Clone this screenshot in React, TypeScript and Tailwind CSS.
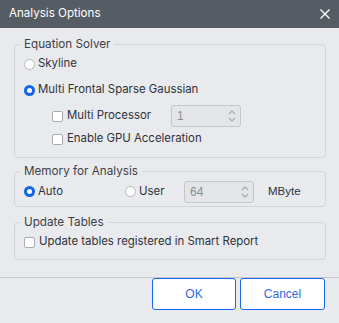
import React from "react";

const inter = { fontFamily: "Inter, 'Noto Sans', sans-serif" };

function Radio({ checked }: { checked?: boolean }) {
  return checked ? (
    <span className="flex h-[11px] w-[11px] shrink-0 items-center justify-center rounded-full bg-[#1565e8]">
      <span className="h-[5px] w-[5px] rounded-full bg-white" />
    </span>
  ) : (
    <span className="h-[11px] w-[11px] shrink-0 rounded-full border border-[#b4b8be] bg-white" />
  );
}

function Check() {
  return <span className="h-[11px] w-[11px] shrink-0 rounded-[2px] border border-[#a8acb2] bg-white" />;
}

function Spin({ value }: { value: string }) {
  return (
    <div className="flex h-[22px] w-[70px] shrink-0 items-center justify-between rounded-[3px] border border-[#c3c6cb] bg-[#e3e5e9] pl-[5px] pr-[3px]">
      <span className="font-['Liberation_Sans',Arial,sans-serif] text-[12px] text-[#8a8d92]">{value}</span>
      <svg width="10" height="16" viewBox="0 0 10 16" fill="none" stroke="#a7aaaf" strokeWidth="1.2">
        <path d="M2 6 L5 3 L8 6" />
        <path d="M2 10 L5 13 L8 10" />
      </svg>
    </div>
  );
}

function Group({ title, children, className }: { title: string; children: React.ReactNode; className?: string }) {
  return (
    <fieldset className={"ml-[14px] mr-[13px] rounded-[4px] border border-[#d2d4d9] " + (className ?? "")}>
      <legend className="ml-[5px] px-1 text-[11.7px] leading-[16px] text-[#3d4148]">{title}</legend>
      {children}
    </fieldset>
  );
}

export default function App() {
  return (
    <div className="flex h-[323px] w-[339px] flex-col bg-[#e9eaee] text-[11.4px] text-[#2e3238]" style={inter}>
      {/* Title bar */}
      <div className="flex h-[28px] shrink-0 items-center justify-between bg-[#565c64] pl-[9px] pr-[9px]">
        <span className="text-[11.6px] text-white">Analysis Options</span>
        <svg width="10" height="10" viewBox="0 0 10 10" stroke="white" strokeWidth="1.3">
          <path d="M0.5 0.5 L9.5 9.5 M9.5 0.5 L0.5 9.5" />
        </svg>
      </div>

      {/* Equation Solver */}
      <Group title="Equation Solver" className="mt-[8px] pb-[9px]">
        <div className="mt-[3px] flex h-[18px] items-center gap-[3px] pl-[9px]">
          <Radio />
          <span>Skyline</span>
        </div>
        <div className="mt-[8px] flex h-[18px] items-center gap-[3px] pl-[9px]">
          <Radio checked />
          <span>Multi Frontal Sparse Gaussian</span>
        </div>
        <div className="mt-[6px] flex h-[22px] items-center pl-[37px]">
          <Check />
          <span className="ml-[4px] w-[104px]">Multi Processor</span>
          <Spin value="1" />
        </div>
        <div className="mt-[3px] flex h-[18px] items-center gap-[4px] pl-[37px]">
          <Check />
          <span>Enable GPU Acceleration</span>
        </div>
      </Group>

      {/* Memory */}
      <Group title="Memory for Analysis" className="mt-[5px] pb-[4px]">
        <div className="mt-[2px] flex h-[21px] items-center pl-[9px]">
          <Radio checked />
          <span className="ml-[3px] w-[87px]">Auto</span>
          <Radio />
          <span className="ml-[3px] w-[45px]">User</span>
          <Spin value="64" />
          <span className="ml-[14px] font-['Liberation_Sans',Arial,sans-serif] text-[11.5px]">MByte</span>
        </div>
      </Group>

      {/* Update Tables */}
      <Group title="Update Tables" className="mt-[7px] pb-[8px]">
        <div className="mt-[3px] flex h-[18px] items-center gap-[4px] pl-[9px]">
          <Check />
          <span>Update tables registered in Smart Report</span>
        </div>
      </Group>

      {/* Footer */}
      <div className="mt-[17px] border-t border-[#c6c8cc]" />
      <div className="flex justify-end gap-[4px] pr-[14px] font-['Liberation_Sans',Arial,sans-serif] text-[12px] text-[#2f6ae0]">
        <button className="h-[32px] w-[84px] rounded-[3px] border border-[#1b66ee] bg-white">OK</button>
        <button className="h-[32px] w-[85px] rounded-[3px] border border-[#1b66ee] bg-white">Cancel</button>
      </div>
    </div>
  );
}
